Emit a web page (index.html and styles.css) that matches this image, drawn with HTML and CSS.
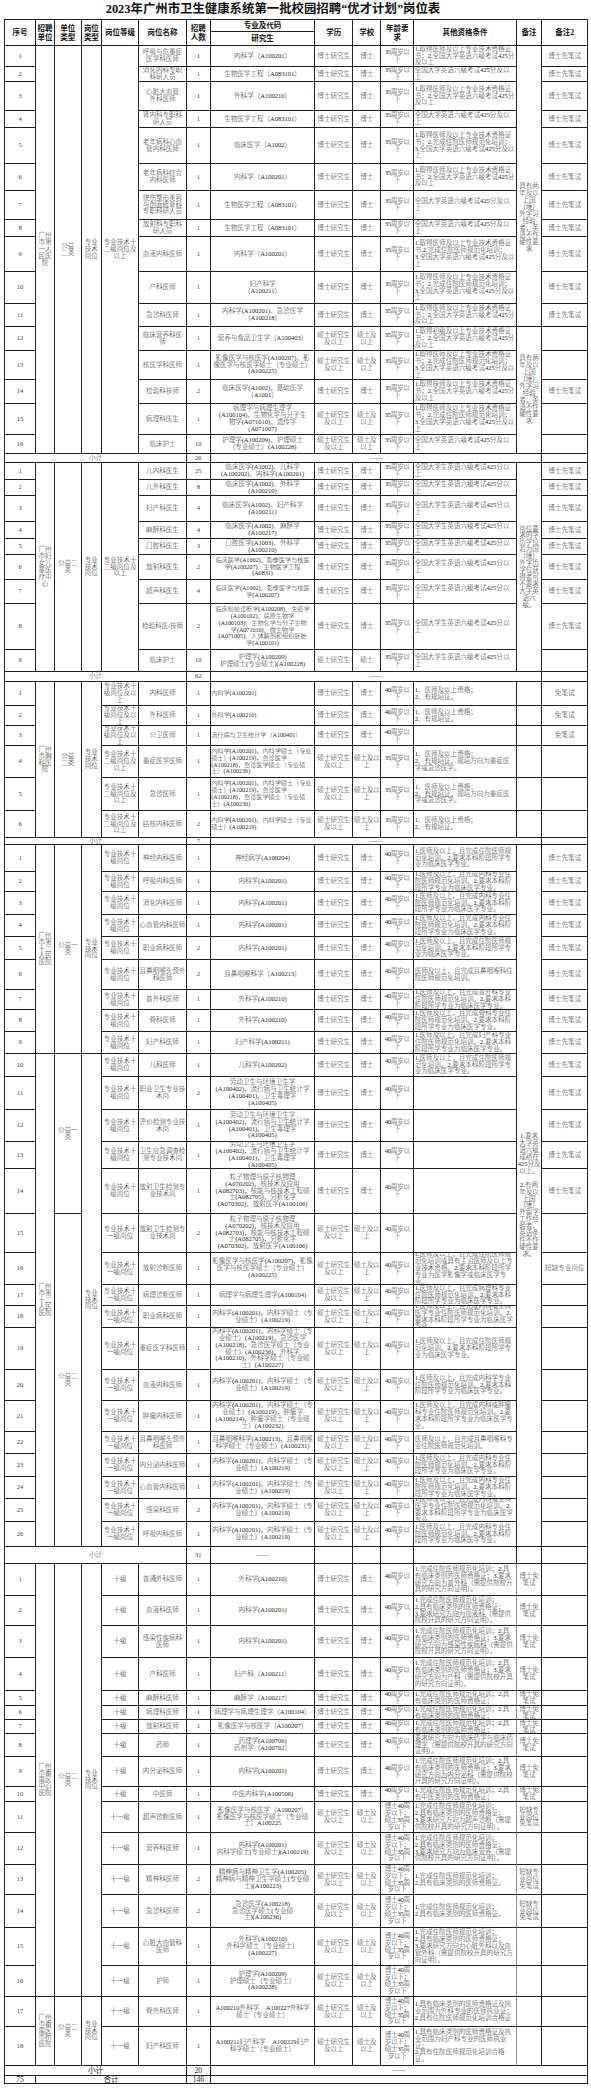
FILE: index.html
```html
<!DOCTYPE html>
<html lang="zh-CN">
<head>
<meta charset="utf-8">
<title>2023年广州市卫生健康系统第一批校园招聘“优才计划”岗位表</title>
<link rel="stylesheet" href="styles.css">
</head>
<body>
<h1 class="title">2023年广州市卫生健康系统第一批校园招聘“优才计划”岗位表</h1>
<div class="sheet">
<!-- header -->
<div class="hd r2"><span>序号</span></div>
<div class="hd r2"><span>招聘<br>单位</span></div>
<div class="hd r2"><span>单位<br>类型</span></div>
<div class="hd r2"><span>岗位<br>类型</span></div>
<div class="hd r2"><span>岗位等级</span></div>
<div class="hd r2"><span>岗位名称</span></div>
<div class="hd r2"><span>招聘<br>人数</span></div>
<div class="hd"><span>专业及代码</span></div>
<div class="hd r2"><span>学历</span></div>
<div class="hd r2"><span>学校</span></div>
<div class="hd r2"><span>年龄要<br>求</span></div>
<div class="hd r2"><span>其他资格条件</span></div>
<div class="hd r2"><span>备注</span></div>
<div class="hd r2"><span>备注2</span></div>
<div class="hd"><span>研究生</span></div>

<!-- 广州市第一人民医院 -->
<div class="n"><span>1</span></div>
<div class="r16"><span>广州市第一人民医院</span></div>
<div class="r16"><span>公益<br>二类</span></div>
<div class="r16"><span>专业<br>技术<br>岗位</span></div>
<div class="r16"><span>专业技术十二级岗位及以上</span></div>
<div><span>呼吸与危重症<br>医学科医师</span></div>
<div class="n"><span>1</span></div>
<div><span>内科学（A100201）</span></div>
<div><span>博士研究生</span></div>
<div><span>博士</span></div>
<div class="age"><span>35周岁以<br>下</span></div>
<div class="l"><span>1.取得医师及以上专业技术资格证书；2.全国大学英语六级考试425分及以上</span></div>
<div class="r11 lo"><span>具有两年及以上国（境）外学习经验者，英语不作硬性要求</span></div>
<div><span>博士先笔试</span></div>

<div class="n"><span>2</span></div>
<div><span>消化内科专职<br>科研人员</span></div>
<div class="n"><span>1</span></div>
<div><span>生物医学工程（A083101）</span></div>
<div><span>博士研究生</span></div>
<div><span>博士</span></div>
<div class="age"><span>35周岁以<br>下</span></div>
<div class="l"><span>全国大学英语六级考试425分及以<br>上</span></div>
<div><span>博士先笔试</span></div>

<div class="n"><span>3</span></div>
<div><span>心脏大血管<br>外科医师</span></div>
<div class="n"><span>1</span></div>
<div><span>外科学（A100210）</span></div>
<div><span>博士研究生</span></div>
<div><span>博士</span></div>
<div class="age"><span>35周岁以<br>下</span></div>
<div class="l"><span>1.取得医师及以上专业技术资格证书；2.全国大学英语六级考试425分及以上</span></div>
<div><span>博士先笔试</span></div>

<div class="n"><span>4</span></div>
<div><span>肾内科专职科<br>研人员</span></div>
<div class="n"><span>1</span></div>
<div><span>生物医学工程（A083101）</span></div>
<div><span>博士研究生</span></div>
<div><span>博士</span></div>
<div class="age"><span>35周岁以<br>下</span></div>
<div class="l"><span>全国大学英语六级考试425分及以<br>上</span></div>
<div><span>博士先笔试</span></div>

<div class="n"><span>5</span></div>
<div><span>老年病科心血<br>管内科医师</span></div>
<div class="n"><span>1</span></div>
<div><span>临床医学（A1002）</span></div>
<div><span>博士研究生</span></div>
<div><span>博士</span></div>
<div class="age"><span>35周岁以<br>下</span></div>
<div class="l"><span>1.取得医师及以上专业技术资格证书；2.完成住院医师规范化培训；<br>3.全国大学英语六级考试425分及以上</span></div>
<div><span>博士先笔试</span></div>

<div class="n"><span>6</span></div>
<div><span>老年病科综合<br>内科医师</span></div>
<div class="n"><span>1</span></div>
<div><span>内科学（A100201）</span></div>
<div><span>博士研究生</span></div>
<div><span>博士</span></div>
<div class="age"><span>35周岁以<br>下</span></div>
<div class="l"><span>1.取得医师及以上专业技术资格证书；2.全国大学英语六级考试425分及以上</span></div>
<div><span>博士先笔试</span></div>

<div class="n"><span>7</span></div>
<div><span>烧伤整形美容<br>与创面修复科<br>专职科研人员</span></div>
<div class="n"><span>1</span></div>
<div><span>生物医学工程（A083101）</span></div>
<div><span>博士研究生</span></div>
<div><span>博士</span></div>
<div class="age"><span>35周岁以<br>下</span></div>
<div class="l"><span>全国大学英语六级考试425分及以<br>上</span></div>
<div><span>博士先笔试</span></div>

<div class="n"><span>8</span></div>
<div><span>放射科专职科<br>研人员</span></div>
<div class="n"><span>1</span></div>
<div><span>生物医学工程（A083101）</span></div>
<div><span>博士研究生</span></div>
<div><span>博士</span></div>
<div class="age"><span>35周岁以<br>下</span></div>
<div class="l"><span>全国大学英语六级考试425分及以<br>上</span></div>
<div><span>博士先笔试</span></div>

<div class="n"><span>9</span></div>
<div><span>血液内科医师</span></div>
<div class="n"><span>1</span></div>
<div><span>内科学（A100201）</span></div>
<div><span>博士研究生</span></div>
<div><span>博士</span></div>
<div class="age"><span>35周岁以<br>下</span></div>
<div class="l"><span>1.取得医师及以上专业技术资格证书.2.完成住院医师规范化培训；<br>3.全国大学英语六级考试425分及以上</span></div>
<div><span>博士先笔试</span></div>

<div class="n"><span>10</span></div>
<div><span>产科医师</span></div>
<div class="n"><span>1</span></div>
<div><span>妇产科学<br>（A100211）</span></div>
<div><span>博士研究生</span></div>
<div><span>博士</span></div>
<div class="age"><span>35周岁以<br>下</span></div>
<div class="l"><span>1.取得医师及以上专业技术资格证书；2.完成住院医师规范化培训；<br>3.全国大学英语六级考试425分及以上</span></div>
<div><span>博士先笔试</span></div>

<div class="n"><span>11</span></div>
<div><span>急诊科医师</span></div>
<div class="n"><span>1</span></div>
<div><span>内科学(A100201)、急诊医学<br>（A100218）</span></div>
<div><span>博士研究生</span></div>
<div><span>博士</span></div>
<div class="age"><span>35周岁以<br>下</span></div>
<div class="l"><span>1.取得医师及以上专业技术资格证书；2.全国大学英语六级考试425分及以上</span></div>
<div><span>博士先笔试</span></div>

<div class="n"><span>12</span></div>
<div><span>临床营养科医<br>师</span></div>
<div class="n"><span>1</span></div>
<div><span>营养与食品卫生学（A100403）</span></div>
<div><span>硕士研究生<br>及以上</span></div>
<div><span>硕士及<br>以上</span></div>
<div class="age"><span>35周岁以<br>下</span></div>
<div class="l"><span>1.取得初级及以上专业技术资格证书；2.全国大学英语六级考试425分及以上</span></div>
<div class="r5"><span>具有两年及以上国（境）外学习经验者，英语不作硬性要求</span></div>
<div></div>

<div class="n"><span>13</span></div>
<div><span>核医学科医师</span></div>
<div class="n"><span>1</span></div>
<div><span>影像医学与核医学(A100207)，影<br>像医学与核医学硕士（专业硕士）<br>(A100225)</span></div>
<div><span>硕士研究生<br>及以上</span></div>
<div><span>硕士及<br>以上</span></div>
<div class="age"><span>35周岁以<br>下</span></div>
<div class="l"><span>1.取得医师及以上专业技术资格证书；2.完成住院医师规范化培训；<br>3.全国大学英语六级考试425分及以上</span></div>
<div></div>

<div class="n"><span>14</span></div>
<div><span>检验科技师</span></div>
<div class="n"><span>2</span></div>
<div><span>临床医学(A1002)，基础医学<br>（A1001）</span></div>
<div><span>博士研究生</span></div>
<div><span>博士</span></div>
<div class="age"><span>35周岁以<br>下</span></div>
<div class="l"><span>1.取得技师及以上专业技术资格证书；2.全国大学英语六级考试425分及以上</span></div>
<div><span>博士先笔试</span></div>

<div class="n"><span>15</span></div>
<div><span>病理科医生</span></div>
<div class="n"><span>1</span></div>
<div><span>病理学与病理生理学<br>(A100104)，生物化学与分子生<br>物学(A071010)，遗传学<br>(A071007)</span></div>
<div><span>硕士研究生<br>及以上</span></div>
<div><span>硕士及<br>以上</span></div>
<div class="age"><span>35周岁以<br>下</span></div>
<div class="l"><span>1.取得医师及以上专业技术资格证书；2.完成住院医师规范化培训；<br>3.全国大学英语六级考试425分及以上</span></div>
<div></div>

<div class="n"><span>16</span></div>
<div><span>临床护士</span></div>
<div class="n"><span>10</span></div>
<div><span>护理学(A100209)，护理硕士<br>（专业硕士）(A100228)</span></div>
<div><span>硕士研究生<br>及以上</span></div>
<div><span>硕士及<br>以上</span></div>
<div class="age"><span>35周岁以<br>下</span></div>
<div class="l"><span>全国大学英语六级考试425分及以<br>上</span></div>
<div></div>

<div class="c6"><span>小计</span></div>
<div class="n"><span>26</span></div>
<div class="c6"><span>——</span></div>
<div></div>

<!-- 广州市妇女儿童医疗中心 -->
<div class="n"><span>1</span></div>
<div class="r9"><span>广州市妇女儿童医疗中心</span></div>
<div class="r9"><span>公益二类</span></div>
<div class="r9"><span>专业<br>技术<br>岗位</span></div>
<div class="r9"><span>专业技术十二级岗位及以上</span></div>
<div><span>儿内科医生</span></div>
<div class="n"><span>25</span></div>
<div><span>临床医学(A1002)、儿科学<br>(A100202)、内科学(A100201)</span></div>
<div><span>博士研究生</span></div>
<div><span>博士</span></div>
<div class="age"><span>35周岁以<br>下</span></div>
<div class="l"><span>全国大学生英语六级考试425分以上</span></div>
<div class="r9"><span>岗位要求的学历学位若为国（境）外学历学位获得者可不要求大学英语六级。</span></div>
<div><span>博士先笔试</span></div>

<div class="n"><span>2</span></div>
<div><span>儿外科医生</span></div>
<div class="n"><span>8</span></div>
<div><span>临床医学(A1002)、外科学<br>(A100210)</span></div>
<div><span>博士研究生</span></div>
<div><span>博士</span></div>
<div class="age"><span>35周岁以<br>下</span></div>
<div class="l"><span>全国大学生英语六级考试425分以上</span></div>
<div><span>博士先笔试</span></div>

<div class="n"><span>3</span></div>
<div><span>妇产科医生</span></div>
<div class="n"><span>4</span></div>
<div><span>临床医学(A1002)、妇产科学<br>(A100211)</span></div>
<div><span>博士研究生</span></div>
<div><span>博士</span></div>
<div class="age"><span>35周岁以<br>下</span></div>
<div class="l"><span>全国大学生英语六级考试425分以上</span></div>
<div><span>博士先笔试</span></div>

<div class="n"><span>4</span></div>
<div><span>麻醉科医生</span></div>
<div class="n"><span>4</span></div>
<div><span>临床医学(A1002)、麻醉学<br>(A100217)</span></div>
<div><span>博士研究生</span></div>
<div><span>博士</span></div>
<div class="age"><span>35周岁以<br>下</span></div>
<div class="l"><span>全国大学生英语六级考试425分以上</span></div>
<div><span>博士先笔试</span></div>

<div class="n"><span>5</span></div>
<div><span>口腔科医生</span></div>
<div class="n"><span>3</span></div>
<div><span>口腔医学(A1003)、外科学<br>(A100210)</span></div>
<div><span>博士研究生</span></div>
<div><span>博士</span></div>
<div class="age"><span>35周岁以<br>下</span></div>
<div class="l"><span>全国大学生英语六级考试425分以上</span></div>
<div><span>博士先笔试</span></div>

<div class="n"><span>6</span></div>
<div><span>放射科医生</span></div>
<div class="n"><span>2</span></div>
<div class="sm"><span>临床医学(A1002)、影像医学与核医<br>学(A100207)、生物医学工程<br>(A0831)</span></div>
<div><span>博士研究生</span></div>
<div><span>博士</span></div>
<div class="age"><span>35周岁以<br>下</span></div>
<div class="l"><span>全国大学生英语六级考试425分以上</span></div>
<div><span>博士先笔试</span></div>

<div class="n"><span>7</span></div>
<div><span>超声科医生</span></div>
<div class="n"><span>4</span></div>
<div class="sm"><span>临床医学(A1002)、影像医学与核医<br>学(A100207)</span></div>
<div><span>博士研究生</span></div>
<div><span>博士</span></div>
<div class="age"><span>35周岁以<br>下</span></div>
<div class="l"><span>全国大学生英语六级考试425分以上</span></div>
<div><span>博士先笔试</span></div>

<div class="n"><span>8</span></div>
<div><span>检验科医/技师</span></div>
<div class="n"><span>2</span></div>
<div class="sm"><span>临床检验诊断学(A100208)、免疫学<br>(A100102)、病原生物学<br>(A100103)、生物化学与分子生物<br>学(A071010)、微生物学<br>(A071005)、人体解剖和组织胚胎<br>学(A100101)</span></div>
<div><span>博士研究生</span></div>
<div><span>博士</span></div>
<div class="age"><span>35周岁以<br>下</span></div>
<div class="l"><span>全国大学生英语六级考试425分以上</span></div>
<div><span>博士先笔试</span></div>

<div class="n"><span>9</span></div>
<div><span>临床护士</span></div>
<div class="n"><span>10</span></div>
<div><span>护理学(A100209)<br>护理硕士(专业硕士)(A100228)</span></div>
<div><span>硕士研究生</span></div>
<div><span>硕士</span></div>
<div class="age"><span>35周岁以<br>下</span></div>
<div class="l"><span>全国大学生英语六级考试425分以上</span></div>
<div></div>

<div class="c6"><span>小计</span></div>
<div class="n"><span>62</span></div>
<div class="c6"><span>——</span></div>
<div></div>

<!-- 广州市胸科医院 -->
<div class="n"><span>1</span></div>
<div class="r6"><span>广州市胸科医院</span></div>
<div class="r6"><span>公益<br>二类</span></div>
<div class="r6"><span>专业<br>技术<br>岗位</span></div>
<div><span>专业技术十级岗位及以上</span></div>
<div><span>内科医师</span></div>
<div class="n"><span>1</span></div>
<div class="l sm"><span>内科学(A100201)</span></div>
<div><span>博士研究生</span></div>
<div><span>博士</span></div>
<div class="age"><span>40周岁以<br>下</span></div>
<div class="l"><span>1、医师及以上资格；<br>2、有规培证。</span></div>
<div></div>
<div><span>免笔试</span></div>

<div class="n"><span>2</span></div>
<div><span>专业技术十级岗位及以上</span></div>
<div><span>外科医师</span></div>
<div class="n"><span>1</span></div>
<div class="l sm"><span>外科学(A100210)</span></div>
<div><span>博士研究生</span></div>
<div><span>博士</span></div>
<div class="age"><span>40周岁以<br>下</span></div>
<div class="l"><span>1、医师及以上资格；<br>2、有规培证。</span></div>
<div></div>
<div><span>免笔试</span></div>

<div class="n"><span>3</span></div>
<div><span>专业技术十级岗位及以上</span></div>
<div><span>公卫医师</span></div>
<div class="n"><span>1</span></div>
<div class="l sm"><span>流行病与卫生统计学（A100401）</span></div>
<div><span>博士研究生</span></div>
<div><span>博士</span></div>
<div class="age"><span>40周岁以<br>下</span></div>
<div></div>
<div></div>
<div><span>免笔试</span></div>

<div class="n"><span>4</span></div>
<div><span>专业技术十二级岗位及以上</span></div>
<div><span>重症医学医师</span></div>
<div class="n"><span>1</span></div>
<div class="l sm"><span>内科学(A100201)，内科学硕士（专业<br>硕士）(A100219)，急诊医学<br>(A100218)，急诊医学硕士（专业硕<br>士）(A100236)</span></div>
<div><span>硕士研究生<br>及以上</span></div>
<div class="age"><span>硕士及以<br>上</span></div>
<div class="age"><span>35周岁以<br>下</span></div>
<div class="l"><span>1、医师及以上资格；<br>2、有规培证，规培方向为重症医学或急诊医学。</span></div>
<div></div>
<div></div>

<div class="n"><span>5</span></div>
<div><span>专业技术十二级岗位及以上</span></div>
<div><span>急诊医师</span></div>
<div class="n"><span>1</span></div>
<div class="l sm"><span>内科学(A100201)，内科学硕士（专业<br>硕士）(A100219)，急诊医学<br>(A100218)，急诊医学硕士（专业硕<br>士）(A100236)</span></div>
<div><span>硕士研究生<br>及以上</span></div>
<div class="age"><span>硕士及以<br>上</span></div>
<div class="age"><span>35周岁以<br>下</span></div>
<div class="l"><span>1、医师及以上资格；<br>2、有规培证，规培方向为重症医学或急诊医学。</span></div>
<div></div>
<div></div>

<div class="n"><span>6</span></div>
<div><span>专业技术十二级岗位及以上</span></div>
<div><span>结核内科医师</span></div>
<div class="n"><span>2</span></div>
<div class="l sm"><span>内科学(A100201)，内科学硕士（专业<br>硕士）(A100219)</span></div>
<div><span>硕士研究生<br>及以上</span></div>
<div class="age"><span>硕士及以<br>上</span></div>
<div class="age"><span>35周岁以<br>下</span></div>
<div class="l"><span>1、医师及以上资格；<br>2、有规培证。</span></div>
<div></div>
<div></div>

<div class="c6"><span>小计</span></div>
<div class="n"><span>7</span></div>
<div class="c6"><span>——</span></div>
<div></div>

<!-- 广州市第十二人民医院 -->
<div class="n"><span>1</span></div>
<div class="r9"><span>广州市第十二人民医院</span></div>
<div class="r9"><span>公益一类</span></div>
<div class="r9"><span>专业<br>技术<br>岗位</span></div>
<div><span>专业技术十级岗位</span></div>
<div><span>神经内科医师</span></div>
<div class="n"><span>1</span></div>
<div><span>神经病学(A100204)</span></div>
<div><span>博士研究生</span></div>
<div><span>博士</span></div>
<div class="age"><span>40周岁以<br>下</span></div>
<div class="l"><span>1.医师及以上，且完成住院医师规范化培训。2.要求本科阶段所学专业为临床医学专业。</span></div>
<div class="r26"><span>1.要求大学英语六级成绩在425分及以上。<br><br>2.有两年及以上国（境）外留学工作经验者，英语条件不作硬性要求。</span></div>
<div><span>博士先笔试</span></div>

<div class="n"><span>2</span></div>
<div><span>专业技术十级岗位</span></div>
<div><span>呼吸内科医师</span></div>
<div class="n"><span>1</span></div>
<div><span>内科学(A100201)</span></div>
<div><span>博士研究生</span></div>
<div><span>博士</span></div>
<div class="age"><span>40周岁以<br>下</span></div>
<div class="l"><span>1.医师及以上，且完成内科专业住院医师规范化培训。2.要求本科阶段所学专业为临床医学专业。</span></div>
<div><span>博士先笔试</span></div>

<div class="n"><span>3</span></div>
<div><span>专业技术十级岗位</span></div>
<div><span>消化内科医师</span></div>
<div class="n"><span>1</span></div>
<div><span>内科学(A100201)</span></div>
<div><span>博士研究生</span></div>
<div><span>博士</span></div>
<div class="age"><span>40周岁以<br>下</span></div>
<div class="l"><span>1.医师及以上，且完成内科专业住院医师规范化培训。2.要求本科阶段所学专业为临床医学专业。</span></div>
<div><span>博士先笔试</span></div>

<div class="n"><span>4</span></div>
<div><span>专业技术十级岗位</span></div>
<div><span>心血管内科医师</span></div>
<div class="n"><span>1</span></div>
<div><span>内科学(A100201)</span></div>
<div><span>博士研究生</span></div>
<div><span>博士</span></div>
<div class="age"><span>40周岁以<br>下</span></div>
<div class="l"><span>1.医师及以上，且完成内科专业住院医师规范化培训。2.要求本科阶段所学专业为临床医学专业。</span></div>
<div><span>博士先笔试</span></div>

<div class="n"><span>5</span></div>
<div><span>专业技术十级岗位</span></div>
<div><span>职业病科医师</span></div>
<div class="n"><span>2</span></div>
<div><span>内科学(A100201)</span></div>
<div><span>博士研究生</span></div>
<div><span>博士</span></div>
<div class="age"><span>40周岁以<br>下</span></div>
<div class="l"><span>1.医师及以上，且完成住院医师规范化培训。2.要求本科阶段所学专业为临床医学专业。</span></div>
<div><span>博士先笔试</span></div>

<div class="n"><span>6</span></div>
<div><span>专业技术十级岗位</span></div>
<div><span>耳鼻咽喉头颈外科医师</span></div>
<div class="n"><span>2</span></div>
<div><span>耳鼻咽喉科学（A100213）</span></div>
<div><span>博士研究生</span></div>
<div><span>博士</span></div>
<div class="age"><span>40周岁以<br>下</span></div>
<div class="l"><span>医师及以上，且完成耳鼻咽喉科住院医师规范化培训。</span></div>
<div><span>博士先笔试</span></div>

<div class="n"><span>7</span></div>
<div><span>专业技术十级岗位</span></div>
<div><span>普外科医师</span></div>
<div class="n"><span>1</span></div>
<div><span>外科学(A100210)</span></div>
<div><span>博士研究生</span></div>
<div><span>博士</span></div>
<div class="age"><span>40周岁以<br>下</span></div>
<div class="l"><span>1.医师及以上，且完成普外科专业住院医师规范化培训。2.要求本科阶段所学专业为临床医学专业。</span></div>
<div><span>博士先笔试</span></div>

<div class="n"><span>8</span></div>
<div><span>专业技术十级岗位</span></div>
<div><span>骨科医师</span></div>
<div class="n"><span>1</span></div>
<div><span>外科学(A100210)</span></div>
<div><span>博士研究生</span></div>
<div><span>博士</span></div>
<div class="age"><span>40周岁以<br>下</span></div>
<div class="l"><span>1.医师及以上，且完成骨科专业住院医师规范化培训。2.要求本科阶段所学专业为临床医学专业。</span></div>
<div><span>博士先笔试</span></div>

<div class="n"><span>9</span></div>
<div><span>专业技术十级岗位</span></div>
<div><span>妇产科医师</span></div>
<div class="n"><span>1</span></div>
<div><span>妇产科学(A100211)</span></div>
<div><span>博士研究生</span></div>
<div><span>博士</span></div>
<div class="age"><span>40周岁以<br>下</span></div>
<div class="l"><span>1.医师及以上，且完成妇产科专业住院医师规范化培训。2.要求本科阶段所学专业为临床医学专业。</span></div>
<div><span>博士先笔试</span></div>

<div class="n"><span>10</span></div>
<div class="r17"><span>广州市第十二人民医院</span></div>
<div class="r5"><span>公益一类</span></div>
<div class="r17"><span>专业<br>技术<br>岗位</span></div>
<div><span>专业技术十级岗位</span></div>
<div><span>儿科医师</span></div>
<div class="n"><span>1</span></div>
<div><span>儿科学(A100202)</span></div>
<div><span>博士研究生</span></div>
<div><span>博士</span></div>
<div class="age"><span>40周岁以<br>下</span></div>
<div class="l"><span>1.医师及以上，且完成住院医师规范化培训。2.要求本科阶段所学专业为临床医学专业。</span></div>
<div><span>博士先笔试</span></div>

<div class="n"><span>11</span></div>
<div><span>专业技术十级岗位</span></div>
<div><span>职业卫生专业技术岗</span></div>
<div class="n"><span>2</span></div>
<div><span>劳动卫生与环境卫生学<br>(A100402)，流行病与卫生统计学<br>(A100401)，卫生毒理学<br>(A100405)</span></div>
<div><span>博士研究生</span></div>
<div><span>博士</span></div>
<div class="age"><span>40周岁以<br>下</span></div>
<div></div>
<div><span>博士先笔试</span></div>

<div class="n"><span>12</span></div>
<div><span>专业技术十级岗位</span></div>
<div><span>评价检测专业技术岗</span></div>
<div class="n"><span>1</span></div>
<div><span>劳动卫生与环境卫生学<br>(A100402)，流行病与卫生统计学<br>(A100401)，卫生毒理学<br>(A100405)</span></div>
<div><span>博士研究生</span></div>
<div><span>博士</span></div>
<div class="age"><span>40周岁以<br>下</span></div>
<div></div>
<div><span>博士先笔试</span></div>

<div class="n"><span>13</span></div>
<div><span>专业技术十级岗位</span></div>
<div><span>卫生应急调查检测专业技术岗</span></div>
<div class="n"><span>1</span></div>
<div><span>劳动卫生与环境卫生学<br>(A100402)，流行病与卫生统计学<br>(A100401)，卫生毒理学<br>(A100405)</span></div>
<div><span>博士研究生</span></div>
<div><span>博士</span></div>
<div class="age"><span>40周岁以<br>下</span></div>
<div></div>
<div><span>博士先笔试</span></div>

<div class="n"><span>14</span></div>
<div><span>专业技术十级岗位</span></div>
<div><span>放射卫生检测专业技术岗</span></div>
<div class="n"><span>1</span></div>
<div><span>粒子物理与原子核物理<br>(A070202)，核技术及应用<br>(A082703)，核能与核技术工程硕<br>士(A082705)，分析化学<br>(A070302)，放射医学(A100106)</span></div>
<div><span>博士研究生</span></div>
<div><span>博士</span></div>
<div class="age"><span>40周岁以<br>下</span></div>
<div></div>
<div><span>博士先笔试</span></div>

<div class="n"><span>15</span></div>
<div class="r12"><span>公益二类</span></div>
<div><span>专业技术十一级岗位</span></div>
<div><span>放射卫生检测专业技术岗</span></div>
<div class="n"><span>2</span></div>
<div><span>粒子物理与原子核物理<br>(A070202)，核技术及应用<br>(A082703)，核能与核技术工程硕<br>士(A082705)，分析化学<br>(A070302)，放射医学(A100106)</span></div>
<div><span>硕士研究生<br>及以上</span></div>
<div class="age"><span>硕士及以<br>上</span></div>
<div class="age"><span>40周岁以<br>下</span></div>
<div></div>
<div></div>

<div class="n"><span>16</span></div>
<div><span>专业技术十一级岗位</span></div>
<div><span>放射诊断医师</span></div>
<div class="n"><span>1</span></div>
<div><span>影像医学与核医学(A100207)，影像<br>医学与核医学硕士（专业硕士）<br>(A100225)</span></div>
<div><span>硕士研究生<br>及以上</span></div>
<div class="age"><span>硕士及以<br>上</span></div>
<div class="age"><span>40周岁以<br>下</span></div>
<div class="l"><span>1.医师及以上，且完成住院医师规范化培训或具有主治医师及以上专业技术资格。2.要求本科阶段所学专业为医学影像学或临床医学专业。</span></div>
<div><span>短缺专业岗位</span></div>

<div class="n"><span>17</span></div>
<div><span>专业技术十一级岗位</span></div>
<div><span>病理诊断医师</span></div>
<div class="n"><span>1</span></div>
<div><span>病理学与病理生理学(A100104)</span></div>
<div><span>硕士研究生<br>及以上</span></div>
<div class="age"><span>硕士及以<br>上</span></div>
<div class="age"><span>40周岁以<br>下</span></div>
<div class="l"><span>1.医师及以上，且完成病理科专业住院医师规范化培训。2.要求本科阶段所学专业为临床医学专业。</span></div>
<div></div>

<div class="n"><span>18</span></div>
<div><span>专业技术十一级岗位</span></div>
<div><span>职业病科医师</span></div>
<div class="n"><span>1</span></div>
<div><span>内科学(A100201)，内科学硕士（专<br>业硕士）(A100219)</span></div>
<div><span>硕士研究生<br>及以上</span></div>
<div class="age"><span>硕士及以<br>上</span></div>
<div class="age"><span>40周岁以<br>下</span></div>
<div class="l"><span>1.医师及以上，且完成内科或全科医学专业住院医师规范化培训。2.要求本科阶段所学专业为临床医学专业。</span></div>
<div></div>

<div class="n"><span>19</span></div>
<div><span>专业技术十一级岗位</span></div>
<div><span>重症医学科医师</span></div>
<div class="n"><span>1</span></div>
<div><span>内科学(A100201)，内科学硕士（专<br>业硕士）(A100219)，急诊医学<br>(A100218)，急诊医学硕士（专业<br>硕士）(A100236)，外科学<br>(A100210)，外科学硕士（专业硕<br>士）(A100227)</span></div>
<div><span>硕士研究生<br>及以上</span></div>
<div class="age"><span>硕士及以<br>上</span></div>
<div class="age"><span>40周岁以<br>下</span></div>
<div class="l"><span>1.医师及以上，且完成住院医师规范化培训。2.要求本科阶段所学专业为临床医学专业。</span></div>
<div></div>

<div class="n"><span>20</span></div>
<div><span>专业技术十一级岗位</span></div>
<div><span>血液内科医师</span></div>
<div class="n"><span>1</span></div>
<div><span>内科学(A100201)，内科学硕士（专<br>业硕士）(A100219)</span></div>
<div><span>硕士研究生<br>及以上</span></div>
<div class="age"><span>硕士及以<br>上</span></div>
<div class="age"><span>40周岁以<br>下</span></div>
<div class="l"><span>1.医师及以上，且完成内科学专业住院医师规范化培训。2.要求本科阶段所学专业为临床医学专业。</span></div>
<div></div>

<div class="n"><span>21</span></div>
<div><span>专业技术十一级岗位</span></div>
<div><span>肿瘤内科医师</span></div>
<div class="n"><span>1</span></div>
<div><span>内科学(A100201)，内科学硕士（专<br>业硕士）(A100219)，肿瘤学<br>(A100214)，肿瘤学硕士（专业硕<br>士）(A100232)</span></div>
<div><span>硕士研究生<br>及以上</span></div>
<div class="age"><span>硕士及以<br>上</span></div>
<div class="age"><span>40周岁以<br>下</span></div>
<div class="l"><span>1.医师及以上，且完成内科或肿瘤科专业住院医师规范化培训。2.要求本科阶段所学专业为临床医学专业。</span></div>
<div></div>

<div class="n"><span>22</span></div>
<div><span>专业技术十一级岗位</span></div>
<div><span>耳鼻咽喉头颈外科医师</span></div>
<div class="n"><span>1</span></div>
<div><span>耳鼻咽喉科学(A100213)，耳鼻咽喉<br>科学硕士（专业硕士）(A100231)</span></div>
<div><span>硕士研究生<br>及以上</span></div>
<div class="age"><span>硕士及以<br>上</span></div>
<div class="age"><span>40周岁以<br>下</span></div>
<div class="l"><span>医师及以上，且完成耳鼻咽喉科专业住院医师规范化培训。</span></div>
<div></div>

<div class="n"><span>23</span></div>
<div><span>专业技术十一级岗位</span></div>
<div><span>内分泌内科医师</span></div>
<div class="n"><span>1</span></div>
<div><span>内科学(A100201)，内科学硕士（专<br>业硕士）(A100219)</span></div>
<div><span>硕士研究生<br>及以上</span></div>
<div class="age"><span>硕士及以<br>上</span></div>
<div class="age"><span>40周岁以<br>下</span></div>
<div class="l"><span>1.医师及以上，且完成内科专业住院医师规范化培训。2.要求本科阶段所学专业为临床医学专业。</span></div>
<div></div>

<div class="n"><span>24</span></div>
<div><span>专业技术十一级岗位</span></div>
<div><span>心血管内科医师</span></div>
<div class="n"><span>1</span></div>
<div><span>内科学(A100201)，内科学硕士（专<br>业硕士）(A100219)</span></div>
<div><span>硕士研究生<br>及以上</span></div>
<div class="age"><span>硕士及以<br>上</span></div>
<div class="age"><span>40周岁以<br>下</span></div>
<div class="l"><span>1.医师及以上，且完成内科专业住院医师规范化培训。2.要求本科阶段所学专业为临床医学专业。</span></div>
<div></div>

<div class="n"><span>25</span></div>
<div><span>专业技术十一级岗位</span></div>
<div><span>感染科医师</span></div>
<div class="n"><span>2</span></div>
<div><span>内科学(A100201)，内科学硕士（专<br>业硕士）(A100219)</span></div>
<div><span>硕士研究生<br>及以上</span></div>
<div class="age"><span>硕士及以<br>上</span></div>
<div class="age"><span>40周岁以<br>下</span></div>
<div class="l"><span>1.医师及以上，且完成内科或全科医学专业住院医师规范化培训。2.要求本科阶段所学专业为临床医学专业。</span></div>
<div></div>

<div class="n"><span>26</span></div>
<div><span>专业技术十一级岗位</span></div>
<div><span>呼吸内科医师</span></div>
<div class="n"><span>1</span></div>
<div><span>内科学(A100201)，内科学硕士（专<br>业硕士）(A100219)</span></div>
<div><span>硕士研究生<br>及以上</span></div>
<div class="age"><span>硕士及以<br>上</span></div>
<div class="age"><span>40周岁以<br>下</span></div>
<div class="l"><span>1.医师及以上，且完成内科专业住院医师规范化培训。2.要求本科阶段所学专业为临床医学专业。</span></div>
<div></div>

<div class="c6"><span>小计</span></div>
<div class="n"><span>31</span></div>
<div><span>——</span></div>
<div></div>
<div></div>
<div></div>
<div></div>
<div></div>
<div></div>

<!-- 广州市番禺区中心医院 -->
<div class="n"><span>1</span></div>
<div class="r16"><span>广州市番禺区中心医院</span></div>
<div class="r16"><span>公益二类</span></div>
<div class="r16"><span>专业<br>技术<br>岗位</span></div>
<div><span>十级</span></div>
<div><span>普通外科医师</span></div>
<div class="n"><span>1</span></div>
<div><span>外科学(A100210)</span></div>
<div><span>博士研究生</span></div>
<div><span>博士</span></div>
<div class="age"><span>40周岁以<br>下</span></div>
<div class="l gl"><span>1.完成住院医师规范化培训；2.具有临床类别的医师资格证；3.要求研究方向为普外科（需提供院校开具的研究方向证明）。</span></div>
<div><span>博士免笔试</span></div>
<div></div>

<div class="n"><span>2</span></div>
<div><span>十级</span></div>
<div><span>血液科医师</span></div>
<div class="n"><span>1</span></div>
<div><span>内科学(A100201)</span></div>
<div><span>博士研究生</span></div>
<div><span>博士</span></div>
<div class="age"><span>40周岁以<br>下</span></div>
<div class="l gl"><span>1.完成住院医师规范化培训；<br>2.具有临床类别的医师资格证；<br>3.要求研究方向为血液科（需提供院校开具的研究方向证明）。</span></div>
<div><span>博士免笔试</span></div>
<div></div>

<div class="n"><span>3</span></div>
<div><span>十级</span></div>
<div><span>感染性疾病科<br>医师</span></div>
<div class="n"><span>1</span></div>
<div><span>内科学(A100201)</span></div>
<div><span>博士研究生</span></div>
<div><span>博士</span></div>
<div class="age"><span>40周岁以<br>下</span></div>
<div class="l gl"><span>1.完成住院医师规范化培训；2.具有临床类别的医师资格证；3.要求研究方向为感染性疾病科（需提供院校开具的研究方向证明）。</span></div>
<div><span>博士免笔试</span></div>
<div></div>

<div class="n"><span>4</span></div>
<div><span>十级</span></div>
<div><span>产科医师</span></div>
<div class="n"><span>1</span></div>
<div><span>妇产科（A100211）</span></div>
<div><span>博士研究生</span></div>
<div><span>博士</span></div>
<div class="age"><span>40周岁以<br>下</span></div>
<div class="l gl"><span>1.完成住院医师规范化培训；2.具有临床类别的医师资格证；3.要求研究方向为产科（需提供院校开具的研究方向证明）。</span></div>
<div><span>博士免笔试</span></div>
<div></div>

<div class="n"><span>5</span></div>
<div><span>十级</span></div>
<div><span>麻醉科医师</span></div>
<div class="n"><span>1</span></div>
<div><span>麻醉学（A100217）</span></div>
<div><span>博士研究生</span></div>
<div><span>博士</span></div>
<div class="age"><span>40周岁以<br>下</span></div>
<div class="l gl"><span>1.完成住院医师规范化培训；2.具有临床类别的医师资格证；</span></div>
<div><span>博士免笔试</span></div>
<div></div>

<div class="n"><span>6</span></div>
<div><span>十级</span></div>
<div><span>病理科医师</span></div>
<div class="n"><span>1</span></div>
<div><span>病理学与病理生理学（A100104）</span></div>
<div><span>博士研究生</span></div>
<div><span>博士</span></div>
<div class="age"><span>40周岁以<br>下</span></div>
<div class="l gl"><span>1.完成住院医师规范化培训；2.具有临床类别的医师资格证；</span></div>
<div><span>博士免笔试</span></div>
<div></div>

<div class="n"><span>7</span></div>
<div><span>十级</span></div>
<div><span>放射科医师</span></div>
<div class="n"><span>1</span></div>
<div><span>影像医学与核医学（A100207）</span></div>
<div><span>博士研究生</span></div>
<div><span>博士</span></div>
<div class="age"><span>40周岁以<br>下</span></div>
<div class="l gl"><span>1.完成住院医师规范化培训；2.具有临床类别的医师资格证；</span></div>
<div><span>博士免笔试</span></div>
<div></div>

<div class="n"><span>8</span></div>
<div><span>十级</span></div>
<div><span>药师</span></div>
<div class="n"><span>1</span></div>
<div><span>药理学(A100706)<br>药剂学（A100702）</span></div>
<div><span>博士研究生</span></div>
<div><span>博士</span></div>
<div class="age"><span>40周岁以<br>下</span></div>
<div class="l gl"><span>要求研究方向为临床药学与临床药理学（需提供院校开具的研究方向证明）。</span></div>
<div><span>博士免笔试</span></div>
<div></div>

<div class="n"><span>9</span></div>
<div><span>十级</span></div>
<div><span>内分泌科医师</span></div>
<div class="n"><span>1</span></div>
<div><span>内科学(A100201)</span></div>
<div><span>博士研究生</span></div>
<div><span>博士</span></div>
<div class="age"><span>40周岁以<br>下</span></div>
<div class="l gl"><span>1.完成住院医师规范化培训；2.具有临床类别的医师资格证；3.要求研究方向为内分泌科（需提供院校开具的研究方向证明）。</span></div>
<div><span>博士免笔试</span></div>
<div></div>

<div class="n"><span>10</span></div>
<div><span>十级</span></div>
<div><span>中医师</span></div>
<div class="n"><span>1</span></div>
<div><span>中医内科学(A100506)</span></div>
<div><span>博士研究生</span></div>
<div><span>博士</span></div>
<div class="age"><span>40周岁以<br>下</span></div>
<div class="l gl"><span>1.完成住院医师规范化培训；2.具有中医类别的医师资格证；</span></div>
<div><span>博士免笔试</span></div>
<div></div>

<div class="n"><span>11</span></div>
<div><span>十一级</span></div>
<div><span>超声诊断医师</span></div>
<div class="n"><span>1</span></div>
<div><span>影像医学与核医学（A100207）<br>影像医学与核医学硕士（专业硕<br>士）A100225</span></div>
<div><span>硕士研究生<br>及以上</span></div>
<div><span>硕士及<br>以上</span></div>
<div class="age"><span>博士40周<br>岁以下；<br>硕士35周<br>岁以下</span></div>
<div class="l gl"><span>1.完成住院医师规范化培训；<br>2.具有临床类别的医师资格证；<br>3.要求研究方向为超声诊断（需提供院校开具的研究方向证明）。</span></div>
<div><span>短缺专业岗位免笔试</span></div>
<div></div>

<div class="n"><span>12</span></div>
<div><span>十一级</span></div>
<div><span>营养科医师</span></div>
<div class="n"><span>1</span></div>
<div><span>内科学(A100201)<br>内科学硕士(专业硕士)(A100219)</span></div>
<div><span>硕士研究生<br>及以上</span></div>
<div><span>硕士及<br>以上</span></div>
<div class="age"><span>博士40周<br>岁以下；<br>硕士35周<br>岁以下</span></div>
<div class="l gl"><span>1.完成住院医师规范化培训；<br>2.具有临床类别的医师资格证；<br>3.要求研究方向为临床营养（需提供院校开具的研究方向证明）。</span></div>
<div></div>
<div></div>

<div class="n"><span>13</span></div>
<div><span>十一级</span></div>
<div><span>精神科医师</span></div>
<div class="n"><span>2</span></div>
<div><span>精神病与精神卫生学(A100205)<br>精神病与精神卫生学硕士(专业硕<br>士)(A100223)</span></div>
<div><span>硕士研究生<br>及以上</span></div>
<div><span>硕士及<br>以上</span></div>
<div class="age"><span>博士40周<br>岁以下；<br>硕士35周<br>岁以下</span></div>
<div class="l gl"><span>1.完成住院医师规范化培训；<br>2.具有临床类别的医师资格证。</span></div>
<div><span>短缺专业岗位免笔试</span></div>
<div></div>

<div class="n"><span>14</span></div>
<div><span>十一级</span></div>
<div><span>急诊科医师</span></div>
<div class="n"><span>2</span></div>
<div><span>急诊医学(A100218)<br>急诊医学硕士(专业硕<br>士)(A100236)</span></div>
<div><span>硕士研究生<br>及以上</span></div>
<div><span>硕士及<br>以上</span></div>
<div class="age"><span>博士40周<br>岁以下；<br>硕士35周<br>岁以下</span></div>
<div class="l gl"><span>1.完成住院医师规范化培训；<br>2.具有临床类别的医师资格证。</span></div>
<div><span>短缺专业岗位免笔试</span></div>
<div></div>

<div class="n"><span>15</span></div>
<div><span>十一级</span></div>
<div><span>心脏大血管科<br>医师</span></div>
<div class="n"><span>1</span></div>
<div><span>外科学(A100210)<br>外科学硕士（专业硕士）<br>(A100227)</span></div>
<div><span>硕士研究生<br>及以上</span></div>
<div><span>硕士及<br>以上</span></div>
<div class="age"><span>博士40周<br>岁以下；<br>硕士35周<br>岁以下</span></div>
<div class="l gl"><span>1.完成住院医师规范化培训；<br>2.具有临床类别的医师资格证；<br>3.要求研究方向为心脏外科以及血管外科（需提供院校开具的研究方向证明）。</span></div>
<div></div>
<div></div>

<div class="n"><span>16</span></div>
<div><span>十一级</span></div>
<div><span>护师</span></div>
<div class="n"><span>1</span></div>
<div><span>护理学(A100209)<br>护理硕士（专业硕士）<br>(A100228)</span></div>
<div><span>硕士研究生<br>及以上</span></div>
<div><span>硕士及<br>以上</span></div>
<div class="age"><span>博士40周<br>岁以下；<br>硕士35周<br>岁以下</span></div>
<div class="gl"></div>
<div></div>
<div></div>

<!-- 广州市番禺区市桥医院 -->
<div class="n"><span>17</span></div>
<div class="r2"><span>广州市番禺区市桥医院</span></div>
<div class="r2"><span>公益二类</span></div>
<div class="r2"><span>专业<br>技术<br>岗位</span></div>
<div><span>十一级</span></div>
<div><span>骨外科医师</span></div>
<div class="n"><span>1</span></div>
<div><span>A100210外科学　A100227外科学<br>硕士（专业硕士）</span></div>
<div><span>硕士研究生<br>及以上</span></div>
<div><span>硕士及<br>以上</span></div>
<div class="age"><span>博士40周<br>岁以下；<br>硕士35周<br>岁以下</span></div>
<div class="l gl"><span>1.具有临床类别的医师资格证及执业范围为外科专业的医师执业证；<br>2.具有住院医师规范化培训合格证</span></div>
<div></div>
<div></div>

<div class="n"><span>18</span></div>
<div><span>十一级</span></div>
<div><span>妇产科医师</span></div>
<div class="n"><span>1</span></div>
<div><span>A100211妇产科学　A100229妇产<br>科学硕士（专业硕士）</span></div>
<div><span>硕士研究生<br>及以上</span></div>
<div><span>硕士及<br>以上</span></div>
<div class="age"><span>博士40周<br>岁以下；<br>硕士35周<br>岁以下</span></div>
<div class="l gl"><span>1.具有临床类别的医师资格证及执业范围为妇产科专业的医师执业证；<br>2.具有住院医师规范化培训合格证。</span></div>
<div></div>
<div></div>

<div class="c6 big"><span>小计</span></div>
<div class="n big"><span>20</span></div>
<div class="c7"><span>——</span></div>

<div class="n big"><span>75</span></div>
<div class="c5 big"><span>合计</span></div>
<div class="n big"><span>146</span></div>
<div class="c7"></div>
</div>
</body>
</html>
```

FILE: styles.css
```css
html, body {
  margin: 0;
  padding: 0;
  background: #fff;
}

body {
  font-family: "Liberation Serif", "Noto Sans CJK SC", serif;
  color: #2b2b2b;
}

.title {
  margin: 0 0 0 4px;
  width: 538px;
  height: 19px;
  font-size: 12.4px;
  line-height: 19px;
  font-weight: 700;
  text-align: center;
  color: #111;
  white-space: nowrap;
}

.sheet {
  display: grid;
  margin-left: 4px;
  width: max-content;
  border-top: 1px solid #222;
  border-left: 1px solid #222;
  grid-template-columns: 31px 19px 26.7px 20.4px 37px 47.8px 23.8px 104.7px 37.7px 28.3px 32.8px 102.8px 25.3px 45.9px;
  grid-template-rows:
    12px 14px
    21px 15px 29px 17px 36px 27px 29px 17px 35px 32px 23px 24px 29px 24px 31px 19px 9px
    17px 16px 26px 17px 16px 25px 24px 46px 22px 10px
    24px 20px 20px 32px 33px 27px 7px
    27px 20px 23px 22px 23px 30px 20px 22px 22px 23px 33px 32px 27px 45px 39px 32px 21px 22px 42px 31px 31px 22px 23px 22px 23px 25px 17px
    32px 30px 32px 33px 15px 14px 14px 23px 30px 15px 31px 32px 30px 33px 38px 31px
    30px 39px
    10px 8px;
}

.sheet > div {
  box-sizing: border-box;
  min-width: 0;
  min-height: 0;
  overflow: hidden;
  border-right: 1px solid #222;
  border-bottom: 1px solid #222;
  display: flex;
  align-items: center;
  justify-content: center;
  text-align: center;
  padding: 0 0.5px;
  font-size: 6.6px;
  line-height: 6.9px;
  font-weight: 300;
  letter-spacing: -0.05px;
}

.sheet > div > span {
  display: block;
  max-width: 100%;
}

.sheet > .hd {
  font-size: 7.5px;
  line-height: 9px;
  font-weight: 700;
  letter-spacing: 0;
  color: #111;
}

.sheet > .l {
  justify-content: flex-start;
  text-align: left;
}

.sheet > .l > span {
  width: 100%;
}

.sheet > .sm {
  font-size: 6.2px;
}

.sheet > .n {
  color: #444;
}

.sheet > .age > span {
  white-space: nowrap;
  letter-spacing: -0.3px;
}

.sheet > .lo {
  padding-top: 64px;
}

.sheet > .big {
  font-size: 7.6px;
  line-height: 8px;
  font-weight: 400;
  color: #222;
}

.sheet > .gl {
  border-right-color: #8c8c8c;
}

.r2 { grid-row: span 2; }
.r5 { grid-row: span 5; }
.r6 { grid-row: span 6; }
.r9 { grid-row: span 9; }
.r11 { grid-row: span 11; }
.r12 { grid-row: span 12; }
.r16 { grid-row: span 16; }
.r17 { grid-row: span 17; }
.r26 { grid-row: span 26; }

.c5 { grid-column: span 5; }
.c6 { grid-column: span 6; }
.c7 { grid-column: span 7; }
```
